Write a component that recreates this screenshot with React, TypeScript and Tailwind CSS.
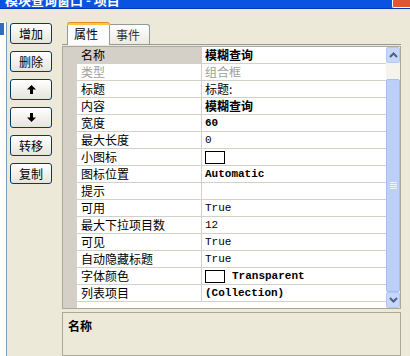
import React from "react";

const cjk = "font-['SimSun','Noto_Sans_CJK_SC',sans-serif]";
const mono = "font-['Liberation_Mono','Noto_Sans_CJK_SC',monospace]";

interface Prop {
  name: string;
  value?: string;
  kind?: "bold" | "mono" | "monoBold" | "disabled" | "swatch" | "plain";
}

const props: Prop[] = [
  { name: "名称", value: "模糊查询", kind: "bold" },
  { name: "类型", value: "组合框", kind: "disabled" },
  { name: "标题", value: "标题:", kind: "plain" },
  { name: "内容", value: "模糊查询", kind: "bold" },
  { name: "宽度", value: "60", kind: "monoBold" },
  { name: "最大长度", value: "0", kind: "mono" },
  { name: "小图标", kind: "swatch" },
  { name: "图标位置", value: "Automatic", kind: "monoBold" },
  { name: "提示" },
  { name: "可用", value: "True", kind: "mono" },
  { name: "最大下拉项目数", value: "12", kind: "mono" },
  { name: "可见", value: "True", kind: "mono" },
  { name: "自动隐藏标题", value: "True", kind: "mono" },
  { name: "字体颜色", value: "Transparent", kind: "swatch" },
  { name: "列表项目", value: "(Collection)", kind: "monoBold" },
];

const XpButton = ({ children }: { children: React.ReactNode }) => (
  <button className="h-[21px] w-[42px] rounded-[3px] border border-[#003c74] bg-gradient-to-b from-white to-[#e6e4da] flex items-center justify-center text-[12px] text-black leading-none">
    {children}
  </button>
);

const Arrow = ({ down }: { down?: boolean }) => (
  <svg width="9" height="9" viewBox="0 0 9 9" className={down ? "rotate-180" : ""}>
    <polygon points="0,4.5 4.5,0 9,4.5" fill="#000" />
    <rect x="3" y="4" width="3" height="5" fill="#000" />
  </svg>
);

const Chevron = ({ down }: { down?: boolean }) => (
  <svg width="9" height="6" viewBox="0 0 9 6" className="block">
    <polyline
      points={down ? "1,1 4.5,4.5 8,1" : "1,5 4.5,1.5 8,5"}
      fill="none"
      stroke="#4d6185"
      strokeWidth="2"
    />
  </svg>
);

const Row = ({ p, selected }: { p: Prop; selected: boolean }) => {
  const disabled = p.kind === "disabled";
  return (
    <div className="flex h-[17px] shrink-0">
      <div className="w-[14px] bg-[#d4d0c8] shrink-0" />
      <div
        className={`w-[125px] shrink-0 border-b border-r border-[#d4d0c8] pl-[4px] flex items-center text-[12px] ${
          selected ? "bg-[#d4d0c8]" : ""
        } ${disabled ? "text-[#a0a0a0]" : "text-black"}`}
      >
        {p.name}
      </div>
      <div className="flex-1 min-w-0 border-b border-[#d4d0c8] pl-[3px] flex items-center gap-[7px] text-[12px] whitespace-nowrap overflow-hidden">
        {p.kind === "swatch" && (
          <div className="w-[20px] h-[13px] border border-black bg-white shrink-0" />
        )}
        {p.value && (
          <span
            className={
              p.kind === "bold"
                ? "font-bold"
                : p.kind === "disabled"
                ? "text-[#a0a0a0]"
                : p.kind === "mono"
                ? `${mono} text-[11px]`
                : p.kind === "monoBold" || p.kind === "swatch"
                ? `${mono} text-[11px] font-bold`
                : ""
            }
          >
            {p.value}
          </span>
        )}
      </div>
    </div>
  );
};

export default function App() {
  return (
    <div className={`relative w-[410px] h-[356px] bg-[#ece9d8] overflow-hidden flex flex-col ${cjk}`}>
      {/* title bar, mostly scrolled off the top */}
      <div className="h-[9px] bg-[#0a52e0] border-b border-[#0038b8] flex justify-between overflow-hidden shrink-0">
        <div className="-mt-[9px] pl-[5px] text-white font-bold text-[13px] leading-[17px] whitespace-nowrap">
          模块查询窗口 - 项目
        </div>
        <div className="w-[18px] h-[8px] bg-[#e2552e] border-l border-b border-white rounded-bl-[2px]" />
      </div>

      <div className="flex flex-1 min-h-0 overflow-hidden">
        {/* list box on the left edge */}
        <div className="w-[7px] shrink-0 mt-[13px] bg-white border-r border-[#7f9db9] pt-[1px]">
          <div className="w-[4px] h-[12px] bg-[#316ac5]" />
        </div>

        <div className="ml-[3px] pt-[14px] flex flex-col gap-[7px] shrink-0">
          <XpButton>增加</XpButton>
          <XpButton>删除</XpButton>
          <XpButton>
            <Arrow />
          </XpButton>
          <XpButton>
            <Arrow down />
          </XpButton>
          <XpButton>转移</XpButton>
          <XpButton>复制</XpButton>
        </div>

        {/* tab control */}
        <div className="ml-[10px] w-[339px] shrink-0 pt-[14px] flex flex-col">
          <div className="flex items-end pl-[5px] h-[22px] border-b border-[#919b9c]">
            <div className="relative h-[22px] w-[43px] -mb-[1px] bg-[#fcfcfe] border-x border-[#919b9c] rounded-t-[3px] flex items-center pl-[6px] text-[12px] text-black">
              <div className="absolute -top-[1px] -left-[1px] -right-[1px] h-[3px] bg-[#ffc73c] border-t border-[#e68b2c] rounded-t-[3px]" />
              属性
            </div>
            <div className="h-[20px] w-[40px] bg-gradient-to-b from-white to-[#eceae0] border-t border-r border-[#919b9c] rounded-tr-[3px] flex items-center pl-[6px] text-[12px] text-[#333]">
              事件
            </div>
          </div>

          <div className="mt-[1px] h-[263px] shrink-0 border border-[#aca899] bg-white flex overflow-hidden">
            <div className="flex-1 min-w-0 flex flex-col">
              {props.map((p, i) => (
                <Row key={p.name} p={p} selected={i === 0} />
              ))}
              <div className="flex flex-1">
                <div className="w-[14px] bg-[#d4d0c8]" />
              </div>
            </div>
            {/* scrollbar */}
            <div className="w-[14px] shrink-0 bg-[#f4f3ee] flex flex-col">
              <div className="h-[16px] shrink-0 bg-[#c6d6fc] border border-[#b4c8f6] rounded-[2px] flex items-center justify-center">
                <Chevron />
              </div>
              <div className="h-[16px] shrink-0" />
              <div className="flex-1 bg-[#bccffb] border border-[#a8bef2] rounded-[2px] flex flex-col items-center justify-center gap-[1px]">
                <div className="w-[7px] h-[1px] bg-[#eef3fe]" />
                <div className="w-[7px] h-[1px] bg-[#eef3fe]" />
                <div className="w-[7px] h-[1px] bg-[#eef3fe]" />
                <div className="w-[7px] h-[1px] bg-[#eef3fe]" />
              </div>
              <div className="h-[16px] shrink-0 bg-[#c6d6fc] border border-[#b4c8f6] rounded-[2px] flex items-center justify-center">
                <Chevron down />
              </div>
            </div>
          </div>

          <div className="mt-[3px] flex-1 border border-[#aca899] bg-[#ece9d8] px-[5px] pt-[4px] text-[12px] font-bold text-black">
            名称
          </div>
        </div>
      </div>
    </div>
  );
}
